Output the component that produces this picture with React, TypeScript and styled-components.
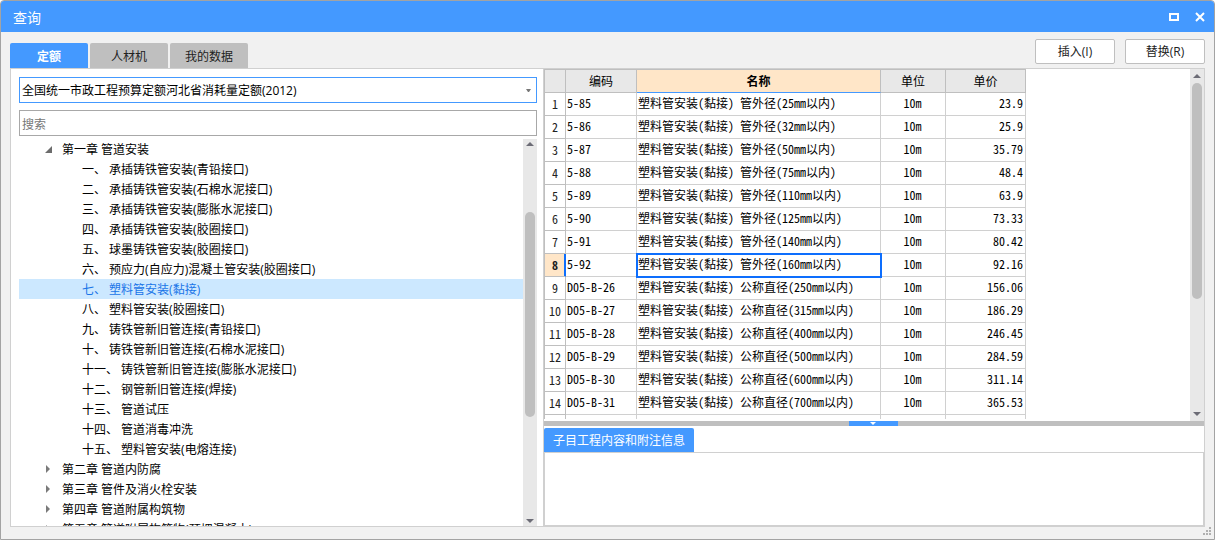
import React from "react";
import styled, { createGlobalStyle, css } from "styled-components";

const uiFont = `"Open Sans", "Noto Sans CJK SC", sans-serif`;
const gridFont = `"Noto Sans Mono CJK SC", "Noto Sans CJK SC", monospace`;
const blue = "#4499ff";
const line = "#d0d0d0";
const grey = "#bfbfbf";

const Global = createGlobalStyle`
  * { box-sizing: border-box; }
  body { margin: 0; background: #fff; }
  button, input, select { font: inherit; margin: 0; }
`;

const Window = styled.main`
  height: 100vh;
  display: flex;
  flex-direction: column;
  border: 1px solid #a3a3a3;
  border-radius: 4px 4px 0 0;
  background: #f1f1f1;
  font: 12px/20px ${uiFont};
  color: #000;
  overflow: hidden;
`;

const TitleBar = styled.header`
  flex: none;
  height: 31px;
  display: flex;
  align-items: center;
  justify-content: space-between;
  padding: 0 8px 0 12px;
  background: ${blue};
  color: #fff;
`;

const Title = styled.h1`
  margin: 0;
  padding-top: 2px;
  font-size: 14px;
  font-weight: 400;
`;

const WindowButtons = styled.div`
  display: flex;
  gap: 14px;
`;

const WindowButton = styled.button`
  display: flex;
  padding: 0;
  border: 0;
  background: none;
  color: #fff;
`;

const Toolbar = styled.div`
  flex: none;
  height: 36px;
  display: flex;
  justify-content: space-between;
  align-items: flex-end;
  padding: 0 9px;
`;

const Tabs = styled.nav`
  display: flex;
  gap: 2px;
`;

const Tab = styled.button<{ $active?: boolean }>`
  width: 78px;
  height: 25px;
  padding: 2px 0 0;
  border: 0;
  border-radius: 2px 2px 0 0;
  background: ${(p) => (p.$active ? blue : grey)};
  color: ${(p) => (p.$active ? "#fff" : "#222")};
  font-weight: ${(p) => (p.$active ? 700 : 400)};
`;

const Actions = styled.div`
  display: flex;
  gap: 10px;
  padding-bottom: 4px;
`;

const ActionButton = styled.button`
  width: 80px;
  height: 25px;
  padding: 0;
  border: 1px solid ${grey};
  border-radius: 2px;
  background: #fff;
  color: #222;
`;

const Panels = styled.div`
  flex: 1;
  min-height: 0;
  display: grid;
  grid-template-columns: 533px minmax(0, 1fr);
  margin: 0 9px 12px;
  border: 1px solid ${line};
  background: #fff;
`;

const LeftPane = styled.section`
  min-height: 0;
  display: flex;
  flex-direction: column;
  padding: 8px 6px 0 8px;
  border-right: 1px solid ${line};
`;

const SelectBox = styled.label`
  flex: none;
  display: flex;
  align-items: center;
  height: 26px;
  padding-right: 5px;
  border: 1px solid ${blue};
`;

const Select = styled.select`
  flex: 1;
  height: 24px;
  padding: 2px 2px 0;
  border: 0;
  outline: 0;
  appearance: none;
  background: transparent;
  color: #000;
`;

const Search = styled.input`
  flex: none;
  height: 26px;
  margin: 7px 0 3px;
  padding: 2px 2px 0;
  border: 1px solid #a8a8a8;
  outline: 0;
  &::placeholder { color: #777; }
`;

const ScrollArea = styled.div`
  flex: 1;
  min-height: 0;
  display: flex;
`;

const Tree = styled.ul`
  flex: 1;
  margin: 0;
  padding: 0;
  list-style: none;
  line-height: 22px;
  overflow: hidden;
`;

const Chapter = styled.li`
  display: flex;
  align-items: flex-start;
  gap: 9px;
  height: 20px;
  padding-left: 26px;
  white-space: pre;
  svg { margin-top: 6px; }
`;

const Item = styled.li<{ $selected?: boolean }>`
  height: 20px;
  padding-left: 63px;
  white-space: pre;
  ${(p) => p.$selected && css`
    background: #cce8ff;
    color: #1a75e8;
  `}
`;

const Track = styled.div<{ $inset: number }>`
  flex: none;
  width: 14px;
  display: flex;
  flex-direction: column;
  align-items: center;
  gap: ${(p) => p.$inset}px;
  padding: ${(p) => p.$inset}px 0;
  background: #e8e8e8;
`;

const Rail = styled.div<{ $before: number; $thumb: number; $after: number }>`
  flex: 1;
  width: 10px;
  display: grid;
  grid-template-rows: ${(p) => p.$before}fr ${(p) => p.$thumb}fr ${(p) => p.$after}fr;
`;

const Thumb = styled.span`
  grid-row: 2;
  border-radius: 5px;
  background: ${grey};
`;

const RightPane = styled.section`
  min-width: 0;
  min-height: 0;
  display: flex;
  flex-direction: column;
`;

const GridArea = styled.div`
  flex: 1;
  min-height: 0;
  display: flex;
  justify-content: space-between;
`;

const GridClip = styled.div`
  min-height: 0;
  margin-bottom: 2px;
  overflow: hidden;
  border-left: 1px solid ${grey};
`;

const Table = styled.table`
  width: 481px;
  table-layout: fixed;
  border-collapse: separate;
  border-spacing: 0;
  font: 12px/16px ${gridFont};
`;

const HeadCell = styled.th<{ $current?: boolean }>`
  height: 24px;
  padding: 0;
  border: solid ${grey};
  border-width: 1px 1px 1px 0;
  background: #e8e8e8;
  font-weight: 400;
  ${(p) => p.$current && css`
    background: #ffe6c8;
    border-bottom-color: ${blue};
    font-weight: 700;
  `}
`;

const RowHead = styled.th<{ $current?: boolean }>`
  height: 23px;
  padding: 0;
  border: solid ${grey};
  border-width: 0 1px 1px 0;
  color: #222;
  font-weight: 400;
  ${(p) => p.$current && css`
    background: #ffe6c8;
    box-shadow: inset -1px 0 #0d6efd;
    border-right-color: #0d6efd;
    font-weight: 700;
  `}
`;

const Cell = styled.td<{ $align?: "center" | "right"; $current?: boolean }>`
  height: 23px;
  padding: 0 2px 2px 1px;
  border: solid ${line};
  border-width: 0 1px 1px 0;
  text-align: ${(p) => p.$align ?? "left"};
  white-space: pre;
  ${(p) => p.$current && css`
    outline: 2px solid #0d6efd;
    outline-offset: -1px;
  `}
`;

const Splitter = styled.div`
  flex: none;
  height: 5px;
  display: flex;
  justify-content: center;
  padding-right: 2px;
  background: ${grey};
`;

const Collapse = styled.button`
  width: 49px;
  height: 5px;
  display: flex;
  justify-content: center;
  padding: 1px 0 0;
  border: 0;
  background: ${blue};
`;

const NoteTab = styled.button`
  flex: none;
  align-self: flex-start;
  width: 150px;
  height: 24px;
  margin-top: 2px;
  padding: 2px 0 0;
  border: 0;
  border-radius: 2px 2px 0 0;
  background: ${blue};
  color: #fff;
`;

const NoteBody = styled.div`
  flex: none;
  height: 74px;
  border: 1px solid ${line};
`;

const Grip = styled.svg`
  position: absolute;
  right: 4px;
  bottom: 4px;
`;

const Arrow = ({ dir }: { dir: "up" | "down" }) => (
  <svg width="8" height="4" viewBox="0 0 8 4" fill="#6c6c76" aria-hidden>
    <path d={dir === "up" ? "M0 4 4 0 8 4Z" : "M0 0H8L4 4Z"} />
  </svg>
);

type ScrollBarProps = { inset: number; before: number; thumb: number; after: number };

const ScrollBar = ({ inset, before, thumb, after }: ScrollBarProps) => (
  <Track $inset={inset} aria-hidden>
    <Arrow dir="up" />
    <Rail $before={before} $thumb={thumb} $after={after}>
      <Thumb />
    </Rail>
    <Arrow dir="down" />
  </Track>
);

const items = [
  "一、 承插铸铁管安装(青铅接口)",
  "二、 承插铸铁管安装(石棉水泥接口)",
  "三、 承插铸铁管安装(膨胀水泥接口)",
  "四、 承插铸铁管安装(胶圈接口)",
  "五、 球墨铸铁管安装(胶圈接口)",
  "六、 预应力(自应力)混凝土管安装(胶圈接口)",
  "七、 塑料管安装(黏接)",
  "八、 塑料管安装(胶圈接口)",
  "九、 铸铁管新旧管连接(青铅接口)",
  "十、 铸铁管新旧管连接(石棉水泥接口)",
  "十一、 铸铁管新旧管连接(膨胀水泥接口)",
  "十二、 钢管新旧管连接(焊接)",
  "十三、 管道试压",
  "十四、 管道消毒冲洗",
  "十五、 塑料管安装(电熔连接)",
];

const chapters = [
  "第二章 管道内防腐",
  "第三章 管件及消火栓安装",
  "第四章 管道附属构筑物",
  "第五章 管道附属构筑物(预埋混凝土)",
];

const rows: [string, string, string][] = [
  ["5-85", "管外径(25mm以内)", "23.9"],
  ["5-86", "管外径(32mm以内)", "25.9"],
  ["5-87", "管外径(50mm以内)", "35.79"],
  ["5-88", "管外径(75mm以内)", "48.4"],
  ["5-89", "管外径(110mm以内)", "63.9"],
  ["5-90", "管外径(125mm以内)", "73.33"],
  ["5-91", "管外径(140mm以内)", "80.42"],
  ["5-92", "管外径(160mm以内)", "92.16"],
  ["D05-B-26", "公称直径(250mm以内)", "156.06"],
  ["D05-B-27", "公称直径(315mm以内)", "186.29"],
  ["D05-B-28", "公称直径(400mm以内)", "246.45"],
  ["D05-B-29", "公称直径(500mm以内)", "284.59"],
  ["D05-B-30", "公称直径(600mm以内)", "311.14"],
  ["D05-B-31", "公称直径(700mm以内)", "365.53"],
];

const current = 7;

export default function App() {
  return (
    <Window>
      <Global />
      <TitleBar>
        <Title>查询</Title>
        <WindowButtons>
          <WindowButton aria-label="最大化">
            <svg width="12" height="10" viewBox="0 0 12 10" fill="none" stroke="currentColor" strokeWidth="2">
              <path d="M2 2H10V8H2Z" />
            </svg>
          </WindowButton>
          <WindowButton aria-label="关闭">
            <svg width="12" height="10" viewBox="0 0 12 10" fill="none" stroke="currentColor" strokeWidth="2">
              <path d="M2 1 10 9M10 1 2 9" />
            </svg>
          </WindowButton>
        </WindowButtons>
      </TitleBar>
      <Toolbar>
        <Tabs>
          <Tab $active>定额</Tab>
          <Tab>人材机</Tab>
          <Tab>我的数据</Tab>
        </Tabs>
        <Actions>
          <ActionButton>插入(I)</ActionButton>
          <ActionButton>替换(R)</ActionButton>
        </Actions>
      </Toolbar>
      <Panels>
        <LeftPane>
          <SelectBox>
            <Select aria-label="定额库">
              <option>全国统一市政工程预算定额河北省消耗量定额(2012)</option>
            </Select>
            <svg width="5" height="3" viewBox="0 0 5 3" fill="#777" aria-hidden>
              <path d="M0 0H5L3 3H2Z" />
            </svg>
          </SelectBox>
          <Search placeholder="搜索" aria-label="搜索" />
          <ScrollArea>
            <Tree>
              <Chapter>
                <svg width="8" height="8" viewBox="0 0 8 8" fill="#6c6c6c" aria-hidden>
                  <path d="M7 1V8H0Z" />
                </svg>
                第一章 管道安装
              </Chapter>
              {items.map((text, i) => (
                <Item key={text} $selected={i === 6}>{text}</Item>
              ))}
              {chapters.map((text) => (
                <Chapter key={text}>
                  <svg width="8" height="8" viewBox="0 0 8 8" fill="#7a7a7a" aria-hidden>
                    <path d="M1 0 5 4 1 8Z" />
                  </svg>
                  {text}
                </Chapter>
              ))}
            </Tree>
            <ScrollBar inset={3} before={63} thumb={205} after={99} />
          </ScrollArea>
        </LeftPane>
        <RightPane>
          <GridArea>
            <GridClip>
              <Table>
                <colgroup>
                  <col style={{ width: 21 }} />
                  <col style={{ width: 71 }} />
                  <col style={{ width: 244 }} />
                  <col style={{ width: 65 }} />
                  <col style={{ width: 80 }} />
                </colgroup>
                <thead>
                  <tr>
                    <HeadCell />
                    <HeadCell>编码</HeadCell>
                    <HeadCell $current>名称</HeadCell>
                    <HeadCell>单位</HeadCell>
                    <HeadCell>单价</HeadCell>
                  </tr>
                </thead>
                <tbody>
                  {rows.map(([code, name, price], i) => (
                    <tr key={code}>
                      <RowHead $current={i === current}>{i + 1}</RowHead>
                      <Cell>{code}</Cell>
                      <Cell $current={i === current}>{`塑料管安装(黏接) ${name}`}</Cell>
                      <Cell $align="center">10m</Cell>
                      <Cell $align="right">{price}</Cell>
                    </tr>
                  ))}
                  <tr>
                    <RowHead />
                    <Cell />
                    <Cell />
                    <Cell />
                    <Cell />
                  </tr>
                </tbody>
              </Table>
            </GridClip>
            <ScrollBar inset={5} before={0} thumb={216} after={108} />
          </GridArea>
          <Splitter>
            <Collapse aria-label="折叠">
              <svg width="6" height="3" viewBox="0 0 6 3" fill="#fff" aria-hidden>
                <path d="M0 0H6L3 3Z" />
              </svg>
            </Collapse>
          </Splitter>
          <NoteTab>子目工程内容和附注信息</NoteTab>
          <NoteBody />
        </RightPane>
      </Panels>
      <Grip width="9" height="9" viewBox="0 0 9 9" fill="#b0b0b0" aria-hidden>
        <path d="M7 0h2v2h-2zM4 3h2v2h-2zM7 3h2v2h-2zM1 6h2v2h-2zM4 6h2v2h-2zM7 6h2v2h-2z" />
      </Grip>
    </Window>
  );
}
